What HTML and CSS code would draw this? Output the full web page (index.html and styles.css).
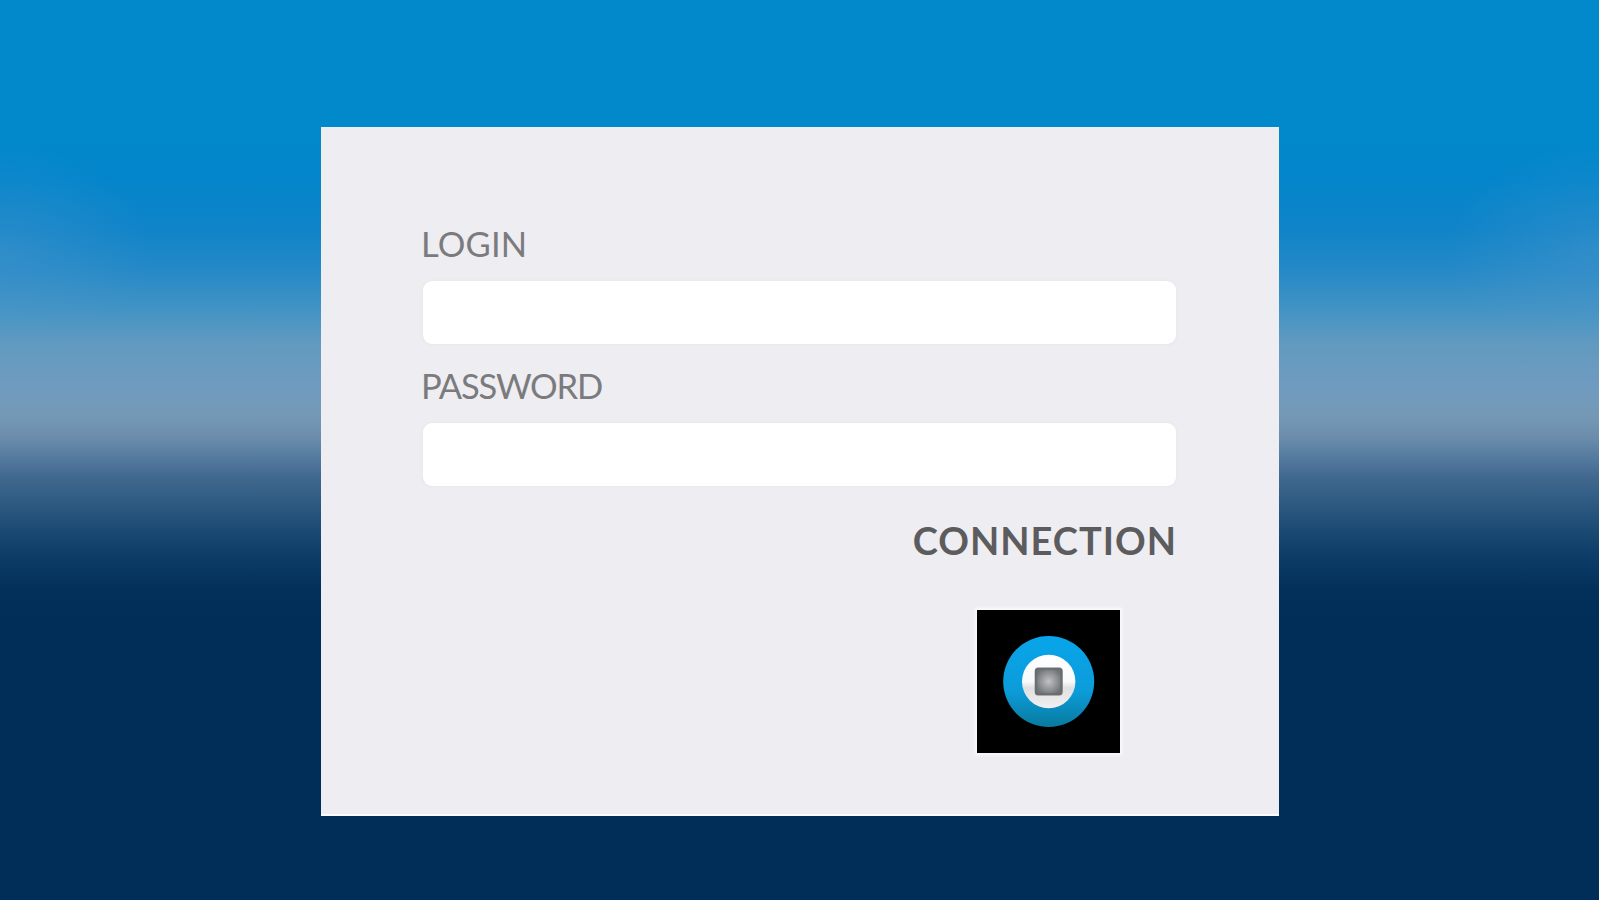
FILE: index.html
```
<!DOCTYPE html>
<html lang="en">
<head>
    <meta charset="UTF-8">
    <meta name="viewport" content="width=device-width, initial-scale=1.0">
    <title>Login</title>
    <link rel="stylesheet" href="styles.css">
</head>
<body>
    <div class="container">
        <form id="loginForm">
            <label for="login">LOGIN</label>
            <input type="text" id="login" name="login">

            <label for="password" class="tight">PASSWORD</label>
            <input type="password" id="password" name="password">

            <button type="submit" class="connection">CONNECTION</button>
        </form>

        <div class="logo">
            <svg width="143" height="143" viewBox="0 0 143 143">
                <defs>
                    <linearGradient id="ring" x1="0" y1="0" x2="0" y2="1">
                        <stop offset="0" stop-color="#08a5ea"/>
                        <stop offset="0.6" stop-color="#0c9cda"/>
                        <stop offset="1" stop-color="#087a9e"/>
                    </linearGradient>
                    <linearGradient id="disc" x1="0" y1="0" x2="0" y2="1">
                        <stop offset="0" stop-color="#ffffff"/>
                        <stop offset="0.5" stop-color="#fafafa"/>
                        <stop offset="0.62" stop-color="#e0e0e0"/>
                        <stop offset="1" stop-color="#f2f0f1"/>
                    </linearGradient>
                    <radialGradient id="chip">
                        <stop offset="0" stop-color="#c0c2c4"/>
                        <stop offset="1" stop-color="#707376"/>
                    </radialGradient>
                </defs>
                <circle cx="71.7" cy="71.5" r="45.5" fill="url(#ring)"/>
                <circle cx="71.7" cy="71.5" r="26.7" fill="url(#disc)"/>
                <rect x="57.7" y="57.5" width="28" height="28" rx="3.5" fill="url(#chip)"/>
                <rect x="59.2" y="59" width="25" height="25" rx="2.5" fill="none" stroke="#66696c" stroke-width="2" opacity="0.6"/>
            </svg>
        </div>
    </div>

    <script>
        document.getElementById('loginForm').addEventListener('submit', function(event) {
            event.preventDefault();
        });
    </script>
</body>
</html>
```
FILE: styles.css
```
body {
    font-family: 'Lato', sans-serif;
    margin: 0;
    padding: 127px 0 0 321px;
    height: 100vh;
    box-sizing: border-box;
    overflow: hidden;
    background:
        radial-gradient(ellipse 150px 105px at 0 250px, rgba(90,155,205,0.32), rgba(90,155,205,0)),
        radial-gradient(ellipse 150px 105px at 100% 250px, rgba(90,155,205,0.32), rgba(90,155,205,0)),
        linear-gradient(#0289cc 0, #0289cc 130px, #0485cb 180px, #1084c8 230px, #2589c7 270px,
            #4594c4 313px, #629ac0 345px, #709bbf 388px, #7499b6 415px, #6c8eac 436px,
            #557a9f 458px, #426990 476px, #2c5980 505px, #184770 535px, #0b3b66 560px,
            #02305b 590px, #002e58 625px);
}
.container {
    background: #eeedf2;
    width: 958px;
    height: 689px;
    padding: 97px 103px 0 102px;
    border-bottom: 2px solid #fcfcfd;
    box-sizing: border-box;
}
form {
    display: flex;
    flex-direction: column;
}
label {
    height: 57px;
    margin-left: -2px;
    line-height: 39px;
    font-size: 34.5px;
    letter-spacing: 0.2px;
    color: #7b7b7e;
}
label.tight {
    letter-spacing: -1.2px;
}
input {
    width: 100%;
    height: 63px;
    margin-bottom: 22px;
    padding: 0 16px;
    border: none;
    border-radius: 9px;
    background: #fff;
    box-shadow: 0 0 3px 1px #e7e8e9;
    box-sizing: border-box;
    font-family: inherit;
    font-size: 30px;
    color: #555;
}
.connection {
    align-self: flex-end;
    height: 44px;
    margin: 10px -1px 0 0;
    padding: 0;
    border: none;
    background: none;
    font-family: inherit;
    font-size: 38px;
    font-weight: bold;
    letter-spacing: 1px;
    line-height: 44px;
    color: #5c5c5e;
    cursor: pointer;
}
.logo {
    width: 143px;
    height: 143px;
    margin: 48px 56px 0 auto;
    background: #000;
    box-shadow: 0 0 3px 2px #fbfbfc;
}
.logo svg {
    display: block;
}
```
